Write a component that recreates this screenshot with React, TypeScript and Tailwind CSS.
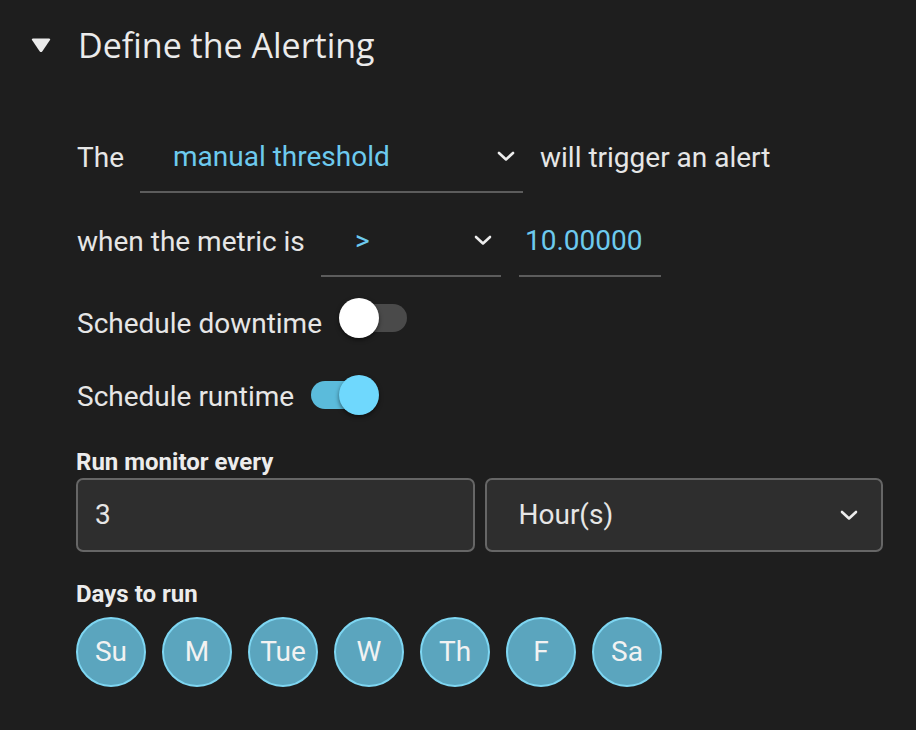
import React from "react";

const Chevron = ({ className = "" }: { className?: string }) => (
  <svg width="18" height="11" viewBox="0 0 18 11" className={className}>
    <polyline points="2,2 9,8.5 16,2" fill="none" stroke="#ededed" strokeWidth="2.6" strokeLinecap="round" strokeLinejoin="round" />
  </svg>
);

const Toggle = ({ on }: { on: boolean }) => (
  <div className="relative w-[68px] h-[40px] shrink-0">
    <div
      className={
        on
          ? "absolute left-0 top-[6px] w-[62px] h-[28px] rounded-full bg-[#5bbbdb]"
          : "absolute right-0 top-[6px] w-[62px] h-[28px] rounded-full bg-[#4a4a4a]"
      }
    />
    <div
      className={
        on
          ? "absolute left-[28px] top-0 w-[40px] h-[40px] rounded-full bg-[#6fd8fd] shadow-[0_2px_4px_rgba(0,0,0,0.5)]"
          : "absolute left-0 top-0 w-[40px] h-[40px] rounded-full bg-white shadow-[0_2px_4px_rgba(0,0,0,0.5)]"
      }
    />
  </div>
);

export default function App() {
  const days = ["Su", "M", "Tue", "W", "Th", "F", "Sa"];
  return (
    <div
      className="w-[916px] h-[730px] bg-[#1e1e1e] text-[#e6e6e6] overflow-hidden"
      style={{ fontFamily: "Roboto, 'Liberation Sans', sans-serif" }}
    >
      {/* Header */}
      <div className="h-[90px] flex items-center pl-[30px]">
        <svg width="22" height="17" viewBox="0 0 22 17" className="shrink-0">
          <path d="M3 1.5 H19 Q21 1.5 19.8 3.3 L12.4 14.2 Q11 16 9.6 14.2 L2.2 3.3 Q1 1.5 3 1.5 Z" fill="#ebebeb" />
        </svg>
        <span
          className="ml-[26px] text-[34px] text-[#ebebeb] leading-none"
          style={{ fontFamily: "'Open Sans', 'Noto Sans', sans-serif" }}
        >
          Define the Alerting
        </span>
      </div>

      <div className="pl-[77px] pr-[33px] pt-[32px] flex flex-col">
        {/* Row 1 */}
        <div className="flex items-center h-[71px] text-[28px]">
          <span className="w-[63px]">The</span>
          <div className="w-[383px] h-[71px] border-b-2 border-[#5c5c5c] flex items-center justify-between pl-[33px] pr-[8px]">
            <span className="text-[#6dcaee]">manual threshold</span>
            <Chevron />
          </div>
          <span className="ml-[17px]">will trigger an alert</span>
        </div>

        {/* Row 2 */}
        <div className="flex items-center h-[71px] mt-[13px] text-[28px]">
          <span className="w-[244px] whitespace-nowrap">when the metric is</span>
          <div className="w-[180px] h-[71px] border-b-2 border-[#5c5c5c] flex items-center justify-between pl-[34px] pr-[9px]">
            <span className="text-[#6dcaee]">&gt;</span>
            <Chevron />
          </div>
          <div className="ml-[18px] w-[142px] h-[71px] border-b-2 border-[#5c5c5c] flex items-center pl-[6px]">
            <span className="text-[#6dcaee]">10.00000</span>
          </div>
        </div>

        {/* Toggles */}
        <div className="flex items-center h-[46px] mt-[21px] text-[28px]">
          <span className="pt-[6px]">Schedule downtime</span>
          <div className="ml-[17px] -mt-[6px]">
            <Toggle on={false} />
          </div>
        </div>
        <div className="flex items-center h-[46px] mt-[28px] text-[28px]">
          <span className="pt-[4px]">Schedule runtime</span>
          <div className="ml-[17px]">
            <Toggle on={true} />
          </div>
        </div>

        {/* Run monitor every */}
        <div className="-ml-[1px] mt-[32px] h-[24px] flex items-center text-[24px] font-bold text-[#ececec]">
          Run monitor every
        </div>
        <div className="-ml-[1px] mt-[4px] grid grid-cols-2 gap-[10px]">
          <div className="h-[74px] rounded-[7px] border-2 border-[#666666] bg-[#2e2e2e] flex items-center pl-[17px] text-[28px]">
            3
          </div>
          <div className="h-[74px] rounded-[7px] border-2 border-[#666666] bg-[#2e2e2e] flex items-center justify-between pl-[32px] pr-[23px] text-[28px]">
            <span>Hour(s)</span>
            <Chevron />
          </div>
        </div>

        {/* Days to run */}
        <div className="-ml-[1px] mt-[30px] h-[24px] flex items-center text-[24px] font-bold text-[#ececec]">
          Days to run
        </div>
        <div className="-ml-[1px] mt-[11px] flex gap-[16px]">
          {days.map((d) => (
            <div
              key={d}
              className="w-[70px] h-[70px] rounded-full bg-[#5ba5be] border-2 border-[#7ed6f2] flex items-center justify-center text-[28px] text-[#f2f2f2]"
            >
              {d}
            </div>
          ))}
        </div>
      </div>
    </div>
  );
}
